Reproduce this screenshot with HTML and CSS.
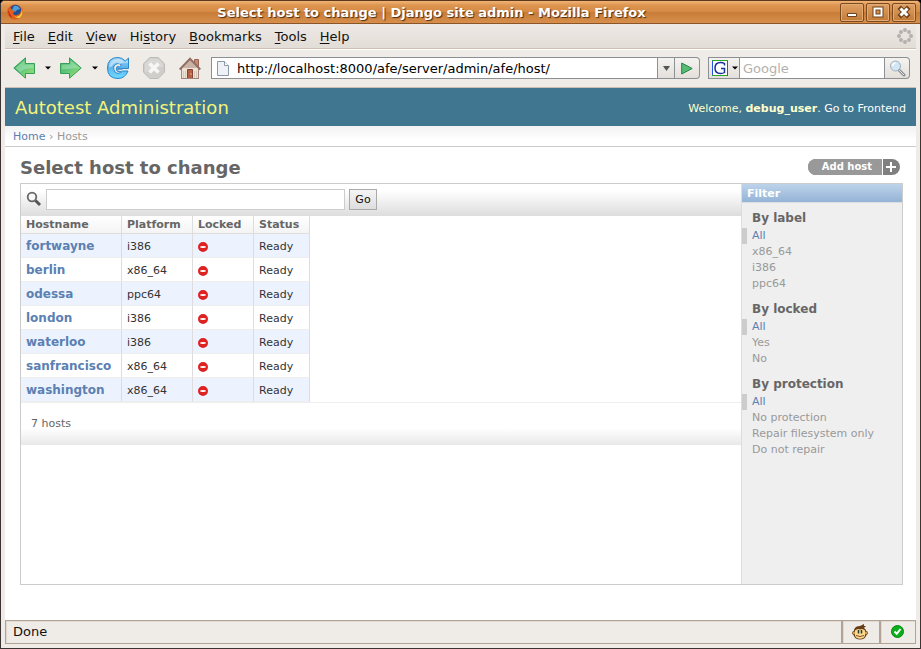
FILE: index.html
```html
<!DOCTYPE html>
<html lang="en">
<head>
<meta charset="utf-8">
<title>Select host to change | Django site admin</title>
<link rel="stylesheet" href="styles.css">
</head>
<body>
<div class="window">
  <header class="titlebar">
    <svg class="app-icon" width="16" height="16" viewBox="0 0 16 16" aria-hidden="true">
      <circle cx="8" cy="8" r="7.5" fill="#e0521b"/>
      <circle cx="8.5" cy="6.5" r="5.7" fill="#244f94"/>
      <path d="M7 2q4-1 6 3l-3 1-2 2-3-2z" fill="#4f9ed8"/>
      <path d="M1 3l1 2 2-1 1 2 3 1-2 2q1 3 4 2 4-1 4-5l1-3q2 5-1 9-3 4-8 3-4-1-5.500-5Q0 6 1 3z" fill="#e2601c"/>
      <path d="M14.500 4q1 4-1.500 7-3 3-6 1 3 3 6 1.500 4-3 1.500-9.500z" fill="#fbd53c"/>
      <path d="M1 6q0 5 4 8-1-3-2-4z" fill="#b81c24"/>
    </svg>
    <div class="window-title">Select host to change | Django site admin - Mozilla Firefox</div>
    <div class="window-buttons">
      <button class="window-button" aria-label="Minimize"><svg width="22" height="17" viewBox="0 0 22 17"><path d="M6.500 9.500h9v3h-9z" fill="#fff" stroke="#6d421c"/></svg></button>
      <button class="window-button" aria-label="Maximize"><svg width="22" height="17" viewBox="0 0 22 17"><path d="M7.500 4.500h7v7h-7z" fill="none" stroke="#6d421c" stroke-width="4"/><path d="M7.500 4.500h7v7h-7z" fill="none" stroke="#fff" stroke-width="2"/></svg></button>
      <button class="window-button" aria-label="Close"><svg width="22" height="17" viewBox="0 0 22 17"><path d="M8 5l6 6M14 5l-6 6" stroke="#6d421c" stroke-width="5" stroke-linecap="square"/><path d="M7.500 4.500l7 7M14.500 4.500l-7 7" stroke="#fff" stroke-width="3"/></svg></button>
    </div>
  </header>

  <div class="frame">
    <nav class="menubar" aria-label="Application menu">
      <button><u>F</u>ile</button>
      <button><u>E</u>dit</button>
      <button><u>V</u>iew</button>
      <button>Hi<u>s</u>tory</button>
      <button><u>B</u>ookmarks</button>
      <button><u>T</u>ools</button>
      <button><u>H</u>elp</button>
      <svg class="throbber" width="16" height="16" viewBox="0 0 16 16" fill="#b3b0ad" aria-hidden="true">
        <circle cx="8" cy="2" r="2"/><circle cx="12" cy="4" r="2"/><circle cx="14" cy="8" r="2"/><circle cx="12" cy="12" r="2"/>
        <circle cx="8" cy="14" r="2"/><circle cx="4" cy="12" r="2"/><circle cx="2" cy="8" r="2"/><circle cx="4" cy="4" r="2"/>
      </svg>
    </nav>

    <div class="toolbar">
      <div class="nav-buttons">
        <button class="nav-button" aria-label="Back">
          <svg width="22" height="22" viewBox="0 0 22 22">
            <defs><linearGradient id="green" x1="0" y1="0" x2="1" y2="1"><stop offset="0" stop-color="#38a850"/><stop offset=".5" stop-color="#62c77b"/><stop offset="1" stop-color="#a4e36b"/></linearGradient></defs>
            <path d="M.8 11L12.500.8v5.700h9v10h-9v4.700z" fill="url(#green)" stroke="#35a05a"/>
            <path d="M2.500 11l9-7.800v4.300h9v3.500q-10 0-13 4z" fill="#a9e5b9" opacity=".55"/>
          </svg>
        </button>
        <button class="caret-button" aria-label="Back history"><svg width="6" height="4" viewBox="0 0 6 4"><path d="M0 .5h6L3 3.500z"/></svg></button>
        <button class="nav-button" aria-label="Forward">
          <svg width="22" height="22" viewBox="0 0 22 22">
            <path d="M21.200 11L9.500.8v5.700h-9v10h9v4.700z" fill="url(#green)" stroke="#35a05a"/>
            <path d="M19.500 11l-9-7.800v4.300h-9v5q9-1 18-1.500z" fill="#a9e5b9" opacity=".55"/>
          </svg>
        </button>
        <button class="caret-button" aria-label="Forward history"><svg width="6" height="4" viewBox="0 0 6 4"><path d="M0 .5h6L3 3.500z"/></svg></button>
        <button class="nav-button" aria-label="Reload">
          <svg width="22" height="22" viewBox="0 0 22 22">
            <defs><linearGradient id="blue" x1="0" y1="0" x2="0" y2="1"><stop offset="0" stop-color="#a5d8f7"/><stop offset=".45" stop-color="#5cb3ec"/><stop offset="1" stop-color="#6fdcff"/></linearGradient></defs>
            <path d="M21.500 1v10.500H11l3.600-3.600Q11.500 5 8.300 7.500T8 15q3.500 3 7.500-1h5.500q-3 7.500-10 7.500Q.5 21.500.5 11T11 .5q4 0 7.300 3.500z" fill="url(#blue)" stroke="#2b86cb"/>
            <path d="M2 10Q3 2 11 2q4 0 7 3.500L20.500 3v3q-4-1-8 1Q9 4 6 8q-2 3-4 2z" fill="#d9effc" opacity=".6"/>
            <path d="M15.500 12h-6q0-2.500 2.500-2.500M9.500 12q0 3 5 2.500" fill="none" stroke="#3d92d2" stroke-width="1.300"/>
          </svg>
        </button>
        <button class="nav-button" aria-label="Stop" disabled>
          <svg width="22" height="22" viewBox="0 0 22 22">
            <path d="M6.800.5h8.400l6.300 6.300v8.400l-6.300 6.300H6.800L.5 15.200V6.800z" fill="#d0cecb" stroke="#bebbb8"/>
            <path d="M7 2h8l5 5v3Q10 10 3 15l-1-1V7z" fill="#e1dfdd" opacity=".6"/>
            <path d="M6.500 6.500l9 9M15.500 6.500l-9 9" stroke="#f7f6f5" stroke-width="3.500"/>
          </svg>
        </button>
        <button class="nav-button" aria-label="Home">
          <svg width="22" height="22" viewBox="0 0 22 22">
            <path d="M15.500 2.500h4v8h-4z" fill="#c58a76" stroke="#9c6453"/>
            <path d="M2.500 11L11 2l8.500 9v10.500h-17z" fill="#ece2d6" stroke="#a58a7b"/>
            <path d="M4 11l7-8 7 8z" fill="#c9b3a6"/>
            <path d="M.7 12.500L11 1.800l10.300 10.700" fill="none" stroke="#947064" stroke-width="2.200"/>
            <path d="M8.500 12.500h5v9h-5z" fill="#b95f43" stroke="#854333"/>
            <path d="M4.500 14v7M6.500 14v7M15.500 14v7M17.500 14v7" stroke="#d9c9bb"/>
            <circle cx="12" cy="17" r=".7" fill="#f3d8a8"/>
            <path d="M2 21.500h18" stroke="#9f8477"/>
          </svg>
        </button>
      </div>

      <form class="location">
        <svg class="page-icon" width="12" height="15" viewBox="0 0 12 15" aria-hidden="true"><path d="M.5.5h7l4 4v10H.5z" fill="#eef2f6" stroke="#8d99a8"/><path d="M7.500.5v4h4" fill="#fff" stroke="#8d99a8"/></svg>
        <input class="location-input" type="text" aria-label="Location" value="http://localhost:8000/afe/server/admin/afe/host/">
        <button class="field-button dropmark" type="button" aria-label="Show history"><svg width="7" height="5" viewBox="0 0 7 5"><path d="M0 0h7L3.500 5z" fill="#555"/></svg></button>
        <button class="field-button go-arrow" type="button" aria-label="Go to address"><svg width="12" height="13" viewBox="0 0 12 13"><path d="M.7 1l10.500 5.500L.7 12z" fill="#58bb75" stroke="#238447"/></svg></button>
      </form>

      <form class="websearch">
        <button class="engine" type="button" aria-label="Choose search engine">
          <svg width="16" height="16" viewBox="0 0 16 16"><path d="M0 0h16v16H0z" fill="#fff"/><path d="M.5 16V0" stroke="#2354e6"/><path d="M0 .5h16M0 15.500h16" stroke="#2ba52e"/><path d="M15.500 1v15" stroke="#d62222"/><path d="M12.500 5.500v-2Q11 2.500 8.500 2.500 3 2.500 3 8t5.500 5.500q2.500 0 4-1V8.500H9" fill="none" stroke="#1a2f9e" stroke-width="1.500"/></svg>
          <svg width="6" height="4" viewBox="0 0 6 4"><path d="M0 .5h6L3 3.500z"/></svg>
        </button>
        <input class="websearch-input" type="text" aria-label="Web search" placeholder="Google">
        <button class="field-button search-go" type="button" aria-label="Search the web"><svg width="17" height="17" viewBox="0 0 17 17"><path d="M9.500 9.500l5.500 5.500" stroke="#8b8f93" stroke-width="3" stroke-linecap="round"/><path d="M10 10l5 5" stroke="#e4e6e8"/><circle cx="6.500" cy="6" r="5" fill="#d3e6f5" stroke="#9eafbd"/><path d="M3.500 6q0-3 3-3" fill="none" stroke="#fff" stroke-width="1.500"/></svg></button>
      </form>
    </div>

    <main class="page">
      <div class="site-header">
        <h1>Autotest Administration</h1>
        <div class="user-tools">Welcome, <strong>debug_user</strong>. <a href="#">Go to Frontend</a></div>
      </div>
      <nav class="breadcrumbs" aria-label="Breadcrumbs"><a href="#">Home</a> › Hosts</nav>

      <div class="content">
        <div class="content-head">
          <h2>Select host to change</h2>
          <a class="add-link" href="#"><span>Add host</span><svg width="17" height="16" viewBox="0 0 17 16" aria-hidden="true"><path d="M8 3v10M3 8h10" stroke="#fff" stroke-width="2"/></svg></a>
        </div>

        <div class="changelist">
          <div class="results">
            <form class="searchbar">
              <label for="q"><svg width="16" height="16" viewBox="0 0 16 16" role="img" aria-label="Search"><path d="M9.500 9.500l4.500 4.500" stroke="#555" stroke-width="3"/><circle cx="6" cy="6" r="4.300" fill="#f8f8f8" stroke="#666" stroke-width="1.800"/></svg></label>
              <input id="q" type="text">
              <button type="button">Go</button>
            </form>
            <table>
              <thead><tr><th class="col-host">Hostname</th><th class="col-platform">Platform</th><th class="col-locked">Locked</th><th class="col-status">Status</th></tr></thead>
              <tbody>
                <tr><th><a href="#">fortwayne</a></th><td>i386</td><td><i class="no" role="img" aria-label="No"></i></td><td>Ready</td></tr>
                <tr><th><a href="#">berlin</a></th><td>x86_64</td><td><i class="no" role="img" aria-label="No"></i></td><td>Ready</td></tr>
                <tr><th><a href="#">odessa</a></th><td>ppc64</td><td><i class="no" role="img" aria-label="No"></i></td><td>Ready</td></tr>
                <tr><th><a href="#">london</a></th><td>i386</td><td><i class="no" role="img" aria-label="No"></i></td><td>Ready</td></tr>
                <tr><th><a href="#">waterloo</a></th><td>i386</td><td><i class="no" role="img" aria-label="No"></i></td><td>Ready</td></tr>
                <tr><th><a href="#">sanfrancisco</a></th><td>x86_64</td><td><i class="no" role="img" aria-label="No"></i></td><td>Ready</td></tr>
                <tr><th><a href="#">washington</a></th><td>x86_64</td><td><i class="no" role="img" aria-label="No"></i></td><td>Ready</td></tr>
              </tbody>
            </table>
            <p class="paginator">7 hosts</p>
          </div>

          <aside class="filter">
            <h2>Filter</h2>
            <h3>By label</h3>
            <ul>
              <li class="selected"><a href="#">All</a></li>
              <li><a href="#">x86_64</a></li>
              <li><a href="#">i386</a></li>
              <li><a href="#">ppc64</a></li>
            </ul>
            <h3>By locked</h3>
            <ul>
              <li class="selected"><a href="#">All</a></li>
              <li><a href="#">Yes</a></li>
              <li><a href="#">No</a></li>
            </ul>
            <h3>By protection</h3>
            <ul>
              <li class="selected"><a href="#">All</a></li>
              <li><a href="#">No protection</a></li>
              <li><a href="#">Repair filesystem only</a></li>
              <li><a href="#">Do not repair</a></li>
            </ul>
          </aside>
        </div>
      </div>
    </main>

    <footer class="statusbar">
      <div class="status-text">Done</div>
      <div class="status-monkey">
        <svg width="16" height="16" viewBox="0 0 16 16" role="img" aria-label="Greasemonkey">
          <path d="M2 6q1-4 6-4l4-2v2h2l-2 2q2 1 2.500 4v3q-1.500 4.500-6.500 4.500T1.500 11z" fill="#653d16"/>
          <circle cx="2" cy="9" r="1.700" fill="#d99a4d" stroke="#653d16" stroke-width=".6"/><circle cx="14" cy="9" r="1.700" fill="#d99a4d" stroke="#653d16" stroke-width=".6"/>
          <path d="M3 6.500Q5.500 4 8 5.500 10.500 4 13 6.500v5Q12 14.800 8 14.800T3 11.500z" fill="#fbd991"/>
          <path d="M6.500 6v3.500M9.500 6v3.500" stroke="#243c32" stroke-width="1.500"/>
          <path d="M4 11.500q4 2 8 0" fill="none" stroke="#874d22"/>
        </svg>
      </div>
      <div class="status-check">
        <svg width="13" height="13" viewBox="0 0 13 13" role="img" aria-label="OK"><circle cx="6.500" cy="6.500" r="6" fill="#0cae1b" stroke="#07880f"/><path d="M3.500 6.500l2.300 2.300L9.500 4" fill="none" stroke="#fff" stroke-width="2"/></svg>
      </div>
    </footer>
  </div>
</div>
</body>
</html>
```
FILE: styles.css
```css
* { box-sizing: border-box; }

body {
  margin: 0;
  background: #000;
  color: #333;
  font-family: "DejaVu Sans", sans-serif;
  font-size: 11px;
}

button, input {
  margin: 0;
  padding: 0;
  border: 0;
  border-radius: 0;
  background: none;
  color: #111;
  font: 13px "DejaVu Sans", sans-serif;
}

svg { display: block; }
a { color: #5b80b2; text-decoration: none; }
h1, h2, h3, p, ul { margin: 0; padding: 0; }
ul { list-style: none; }

.window {
  display: flex;
  flex-direction: column;
  min-height: 100vh;
  border: 1px solid #3b3433;
  border-top-color: #5d3719;
  border-radius: 5px 5px 0 0;
  background: #efebe7;
  overflow: hidden;
}

/* Title bar */
.titlebar {
  display: flex;
  align-items: center;
  height: 23px;
  padding: 0 4px 0 6px;
  border-bottom: 1px solid #8a5528;
  background: linear-gradient(#f1b577, #dc944f 20%, #d68b45 48%, #c77d38 52%, #d78f4b);
}

.window-title {
  flex: 1;
  color: #fff;
  font-size: 13px;
  font-weight: bold;
  text-align: center;
  text-shadow: 1px 1px 1px #4a2c12;
  white-space: nowrap;
}

.window-buttons { display: flex; gap: 2px; }

.window-button {
  width: 24px;
  height: 19px;
  border: 1px solid #7b4a20;
  border-radius: 2px;
  background: linear-gradient(#dfa164, #c47b37);
  box-shadow: inset 0 0 0 1px #e3ac76;
}

/* Window frame and menus */
.frame {
  display: flex;
  flex: 1;
  flex-direction: column;
  padding: 0 4px 4px;
}

.menubar {
  display: flex;
  align-items: center;
  gap: 13px;
  height: 25px;
  padding: 0 3px 0 8px;
  border-bottom: 1px solid #cdbfb3;
  background: linear-gradient(#ede9e5, #e3ddd7);
}

.menubar u { text-underline-offset: 2px; }
.throbber { margin-left: auto; }

.toolbar {
  display: flex;
  align-items: center;
  gap: 8px;
  height: 39px;
  padding: 0 6px 1px 8px;
  border-top: 1px solid #fff;
  border-bottom: 1px solid #cbbfb5;
}

.nav-buttons { display: flex; align-items: center; gap: 10px; padding-right: 2px; }
.nav-buttons .nav-button + .nav-button { margin-left: 4px; }
.caret-button { width: 5px; }

.location, .websearch { display: flex; height: 22px; }
.location { flex: 1; align-items: center; }

.location-input {
  flex: 1;
  align-self: stretch;
  min-width: 0;
  margin-left: -18px;
  padding-left: 25px;
  border: 1px solid #8c9095;
  background: #fff;
  color: #000;
}

.page-icon { position: relative; left: 6px; z-index: 1; margin-right: 6px; }

.field-button {
  display: grid;
  place-items: center;
  align-self: stretch;
  border: 1px solid #8c9095;
  border-left: 0;
  background: linear-gradient(#f5f3f0, #e4dfda);
}

.dropmark { width: 17px; }
.go-arrow { width: 25px; border-radius: 0 4px 4px 0; }

.engine {
  display: flex;
  align-items: center;
  gap: 4px;
  width: 32px;
  padding-left: 3px;
  border: 1px solid #8c9095;
  background: linear-gradient(#f5f3f0, #e4dfda);
}

.websearch-input {
  width: 145px;
  padding-left: 3px;
  border: 1px solid #8c9095;
  border-left: 0;
  background: #fff;
}

.websearch-input::placeholder { color: #b3b1ae; opacity: 1; }
.search-go { width: 25px; border-radius: 0 4px 4px 0; }

/* Web page */
.page {
  display: flex;
  flex: 1;
  flex-direction: column;
  background: #fff;
}

.site-header {
  display: flex;
  align-items: center;
  justify-content: space-between;
  height: 38px;
  padding: 0 10px;
  background: #417690;
  color: #ffc;
}

.site-header h1 { color: #f4f379; font-size: 18px; font-weight: normal; }
.user-tools { padding-top: 2px; }
.user-tools a { color: #fff; }

.breadcrumbs {
  height: 21px;
  padding: 0 8px;
  border-bottom: 1px solid #ccc;
  background: linear-gradient(#f2f2f2, #fff 70%);
  color: #999;
  line-height: 22px;
}

.content {
  display: flex;
  flex: 1;
  flex-direction: column;
  padding: 10px 13px 35px 15px;
}

.content-head {
  display: flex;
  align-items: flex-start;
  justify-content: space-between;
  height: 26px;
  padding-right: 3px;
}

.content-head h2 { color: #666; font-size: 18px; line-height: 21px; }

.add-link {
  display: flex;
  height: 16px;
  margin-top: 2px;
  border-radius: 8px;
  background: #808080;
  color: #fff;
  font-size: 10px;
  font-weight: bold;
  line-height: 15px;
  overflow: hidden;
}

.add-link span {
  padding: 0 10px 0 14px;
  border-right: 1px solid #fff;
  background: #999;
}

.changelist { display: flex; flex: 1; border: 1px solid #ccc; }
.results { flex: 1; min-width: 0; }

.searchbar {
  display: flex;
  align-items: center;
  gap: 4px;
  height: 32px;
  padding: 0 0 2px 5px;
  background: linear-gradient(#fff 20%, #ddd);
}

.searchbar input {
  width: 299px;
  height: 21px;
  border: 1px solid #ccc;
  background: #fff;
}

.searchbar button {
  width: 28px;
  height: 21px;
  border: 1px solid #aaa;
  background: linear-gradient(#f5f5f5, #ddd);
  font-size: 11px;
}

table { border-spacing: 0; }

th, td {
  height: 24px;
  padding: 0 5px;
  border-right: 1px solid #ddd;
  border-bottom: 1px solid #eee;
  line-height: 16px;
  text-align: left;
}

td { padding-top: 2px; }

thead th {
  height: 18px;
  border-bottom-color: #ddd;
  background: linear-gradient(#fff, #f4f4f4);
  color: #666;
}

tbody th { font-size: 12px; }
tbody tr:nth-child(odd) { background: #edf3fe; }
.col-host { width: 101px; }
.col-platform { width: 71px; }
.col-locked { width: 61px; }
.col-status { width: 56px; }

.no {
  display: block;
  width: 10px;
  height: 10px;
  border: solid #d22;
  border-width: 4px 2px;
  border-radius: 5px;
  background: #fff;
}

.paginator {
  height: 43px;
  padding: 0 10px;
  border-top: 1px solid #eee;
  background: linear-gradient(#fff 60%, #e8e8e8);
  color: #666;
  line-height: 42px;
}

.filter { width: 161px; border-left: 1px solid #ddd; background: #efefef; }

.filter h2 {
  height: 19px;
  padding: 0 5px;
  border-bottom: 1px solid #ddd;
  background: linear-gradient(#bdd3ea, #94b3d6);
  color: #fff;
  font-size: 11px;
  line-height: 20px;
}

.filter h3 {
  padding: 7px 10px 2px;
  color: #666;
  font-size: 12px;
  line-height: 16px;
}

.filter ul { padding-bottom: 2px; }
.filter li { padding-left: 10px; line-height: 16px; }
.filter li a { color: #999; }
.filter .selected { padding-left: 5px; border-left: 5px solid #ccc; }
.filter .selected a { color: #5b80b2; }

/* Status bar */
.statusbar { display: flex; height: 24px; color: #111; font-size: 13px; }

.statusbar > div {
  display: flex;
  align-items: center;
  justify-content: center;
  padding: 0 2px 1px 0;
  border: 1px solid #b1a497;
  box-shadow: inset 1px 1px #e1dad3;
}

.statusbar .status-text { flex: 1; justify-content: flex-start; padding-left: 7px; }
.status-monkey { width: 38px; }
.status-check { width: 36px; }
```
